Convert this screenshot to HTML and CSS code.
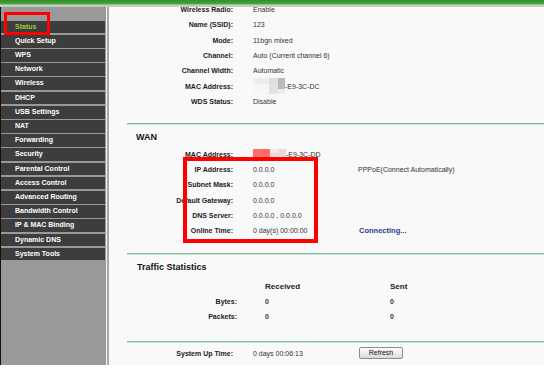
FILE: index.html
```html
<!DOCTYPE html>
<html lang="en">
<head>
    <meta charset="UTF-8">
    <title>Status</title>
    <link rel="stylesheet" href="styles.css">
</head>
<body>

    <div class="topbar"></div>

    <div class="main">
        <div class="sidebar">
            <ul class="menu">
                <li class="active">Status</li>
                <li>Quick Setup</li>
                <li>WPS</li>
                <li>Network</li>
                <li>Wireless</li>
                <li>DHCP</li>
                <li>USB Settings</li>
                <li>NAT</li>
                <li>Forwarding</li>
                <li>Security</li>
                <li>Parental Control</li>
                <li>Access Control</li>
                <li>Advanced Routing</li>
                <li>Bandwidth Control</li>
                <li>IP &amp; MAC Binding</li>
                <li>Dynamic DNS</li>
                <li>System Tools</li>
            </ul>
        </div>
        <div class="divider"></div>

        <div class="content">
            <div class="section wireless">
                <div class="row"><span class="label">Wireless Radio:</span><span class="value">Enable</span></div>
                <div class="row"><span class="label">Name (SSID):</span><span class="value">123</span></div>
                <div class="row"><span class="label">Mode:</span><span class="value">11bgn mixed</span></div>
                <div class="row"><span class="label">Channel:</span><span class="value">Auto (Current channel 6)</span></div>
                <div class="row"><span class="label">Channel Width:</span><span class="value">Automatic</span></div>
                <div class="row">
                    <span class="label">MAC Address:</span>
                    <span class="value mac">
                        <svg class="blur" width="32" height="16" viewBox="0 0 32 16">
                            <rect x="0" y="0" width="16" height="6" fill="#ececec"/>
                            <rect x="16" y="0" width="9" height="6" fill="#dedede"/>
                            <rect x="25" y="0" width="7" height="11" fill="#b9b9bf"/>
                            <rect x="0" y="6" width="16" height="10" fill="#f6f6f6"/>
                            <rect x="16" y="6" width="9" height="10" fill="#e2e2e2"/>
                            <rect x="25" y="11" width="7" height="5" fill="#ececec"/>
                        </svg>-E9-3C-DC
                    </span>
                </div>
                <div class="row"><span class="label">WDS Status:</span><span class="value">Disable</span></div>
            </div>

            <div class="rule rule-wan"></div>
            <h3 class="section-title wan-title">WAN</h3>

            <div class="section wan">
                <div class="row">
                    <span class="label">MAC Address:</span>
                    <span class="value mac">
                        <svg class="blur" width="33" height="10" viewBox="0 0 33 10">
                            <rect x="0" y="0" width="17" height="10" fill="#ff6a6a"/>
                            <rect x="17" y="0" width="16" height="10" fill="#ead8d8"/>
                            <rect x="17" y="0" width="8" height="4" fill="#f3eaea"/>
                        </svg>-E9-3C-DD
                    </span>
                </div>
                <div class="row"><span class="label">IP Address:</span><span class="value">0.0.0.0</span><span class="extra">PPPoE(Connect Automatically)</span></div>
                <div class="row"><span class="label">Subnet Mask:</span><span class="value">0.0.0.0</span></div>
                <div class="row"><span class="label">Default Gateway:</span><span class="value">0.0.0.0</span></div>
                <div class="row"><span class="label">DNS Server:</span><span class="value">0.0.0.0 , 0.0.0.0</span></div>
                <div class="row"><span class="label">Online Time:</span><span class="value">0 day(s) 00:00:00</span><span class="extra status-link">Connecting...</span></div>
            </div>

            <div class="rule rule-traffic"></div>
            <h3 class="section-title traffic-title">Traffic Statistics</h3>

            <div class="section traffic">
                <div class="traffic-row head"><span></span><span class="value">Received</span><span class="sent">Sent</span></div>
                <div class="traffic-row"><span class="label">Bytes:</span><span class="value num">0</span><span class="num sent">0</span></div>
                <div class="traffic-row"><span class="label">Packets:</span><span class="value num">0</span><span class="num sent">0</span></div>
            </div>

            <div class="rule rule-uptime"></div>

            <div class="row uptime">
                <span class="label">System Up Time:</span>
                <span class="value">0 days 00:06:13</span>
                <span class="extra"><button class="btn-refresh">Refresh</button></span>
            </div>
        </div>
    </div>

    <div class="mark mark-status"></div>
    <div class="mark mark-wan"></div>

</body>
</html>
```

FILE: styles.css
```css
body {
    margin: 0;
    padding: 0;
    background: #fff;
    font-family: "Liberation Sans", Arial, sans-serif;
    font-size: 7px;
    color: #333;
    width: 544px;
    height: 377px;
    overflow: hidden;
}
.topbar {
    height: 4px;
    background: linear-gradient(#2f8f2f, #4aa43c);
    border-bottom: 1px solid #8cc870;
    box-shadow: 0 2px 0 #c8c8c8;
    margin-bottom: 2px;
}
.main {
    display: flex;
    height: 358px;
}
.sidebar {
    width: 104px;
    padding-right: 1px;
    border-left: 1px solid #111;
    background: #999;
    padding-top: 13.7px;
}
.menu {
    list-style: none;
    margin: 0;
    padding: 0;
}
.menu li {
    height: 12.7px;
    line-height: 12.7px;
    margin-bottom: 1.5px;
    padding-left: 14px;
    background: #3d3d3d;
    color: #fff;
    font-weight: bold;
    font-size: 7px;
    white-space: nowrap;
}
.menu li.active {
    color: #99cc33;
}
.divider {
    width: 2px;
    border-left: 1px solid #f4f4f4;
    background: #a8a8a8;
}
.content {
    flex: 1;
    background: #f9f9f9;
    padding-left: 18px;
    overflow: hidden;
}

/* label / value rows */
.row {
    display: grid;
    grid-template-columns: 106px 125px 1fr;
    height: 15.3px;
    align-items: center;
    white-space: nowrap;
}
.label {
    text-align: right;
    font-weight: bold;
    color: #222;
}
.value {
    padding-left: 20px;
}
.mac {
    display: flex;
    align-items: center;
}
.blur {
    display: block;
}
.wireless {
    margin-top: -5.15px;
}
.status-link {
    color: #1e3a96;
    font-weight: bold;
    font-size: 7.5px;
    padding-left: 1px;
}

/* green separators */
.rule {
    height: 1px;
    border-top: 1px solid #7db898;
    background: #cfe4d6;
}
.rule-wan {
    margin-top: 14.5px;
}
.rule-traffic {
    margin-top: 14.85px;
}
.rule-uptime {
    margin-top: 16.2px;
}

.section-title {
    margin: 0;
    padding-left: 9px;
    font-size: 9px;
    font-weight: bold;
    color: #111;
}
.wan-title {
    height: 21.2px;
    line-height: 25px;
}
.traffic-title {
    height: 24.2px;
    line-height: 25.4px;
    padding-left: 10px;
}

/* traffic table */
.traffic-row {
    display: grid;
    grid-template-columns: 110px 152px 1fr;
    height: 15px;
    align-items: center;
}
.traffic-row .value {
    padding-left: 28px;
}
.traffic-row .sent {
    padding-left: 1px;
}
.traffic-row.head {
    font-size: 8px;
    font-weight: bold;
    color: #222;
}
.num {
    font-weight: bold;
    color: #3a3320;
}

.uptime {
    margin-top: 2.95px;
}
.btn-refresh {
    margin-left: 1px;
    width: 44px;
    height: 12px;
    padding: 0;
    font-family: "Liberation Sans", Arial, sans-serif;
    font-size: 7px;
    line-height: 10px;
    color: #111;
    border: 1px solid #8c8c8c;
    border-radius: 2px;
    background: linear-gradient(#fefefe, #dadada);
}

/* red annotation boxes drawn over the screenshot */
.mark {
    position: absolute;
    border: 3px solid #ff0000;
    box-sizing: border-box;
}
.mark-status {
    left: 4px;
    top: 12px;
    width: 46px;
    height: 23px;
}
.mark-wan {
    left: 183px;
    top: 157px;
    width: 135px;
    height: 86px;
    border-width: 4px;
}
```
